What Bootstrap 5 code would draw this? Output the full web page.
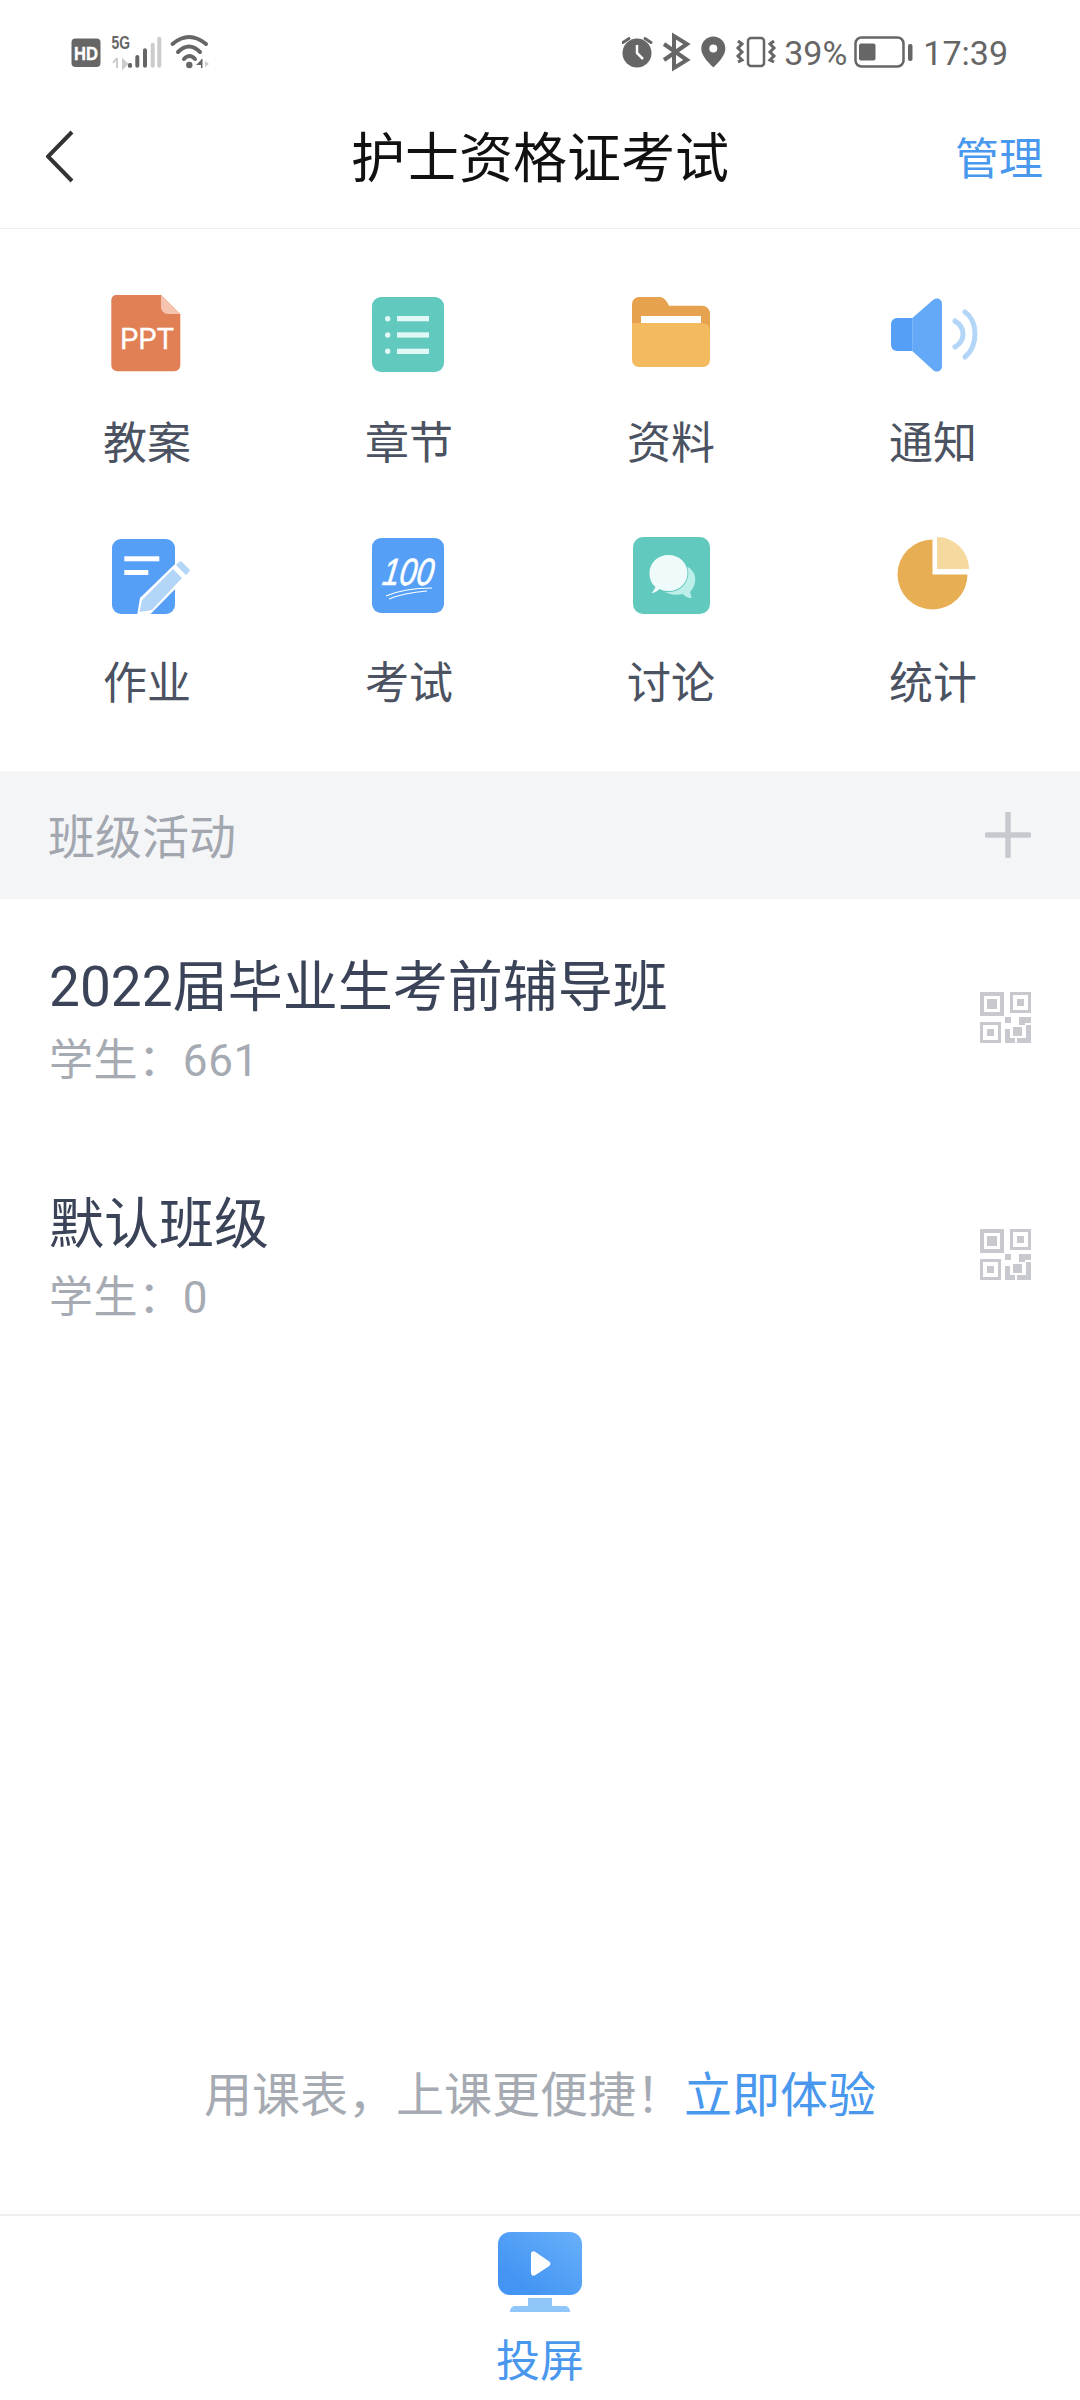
<!DOCTYPE html>
<html lang="zh-CN">
<head>
  <meta charset="UTF-8" />
  <meta name="viewport" content="width=device-width, initial-scale=1" />
  <title>护士资格证考试</title>
  <link href="https://cdn.jsdelivr.net/npm/bootstrap@5.3.3/dist/css/bootstrap.min.css" rel="stylesheet" />
  <style>
    body { font-family: Roboto, "Noto Sans CJK SC", sans-serif; background: #fff; }
    svg { display: block; }
    .stat-bar { height: 100px; padding: 0 72px 0 50px; color: #666; font-size: 34px; line-height: 60px; }
    .stat-num { padding-top: 6px; }
    .stat-icons { margin-right: 7px; }
    .stat-batt { margin-left: 7px; }
    .stat-time { margin-left: 9px; }
    .top-nav { height: 129px; padding: 0 37px 14px 46px; border-bottom: 1px solid #eeeeee; }
    .nav-left { width: 200px; }
    .nav-right { width: 209px; padding-top: 6px; }
    .nav-title { padding-top: 6px; font-size: 54px; line-height: 70px; color: #111; }
    .nav-manage { font-size: 44px; line-height: 70px; color: #4a98ee; text-decoration: none; }
    .tool-grid { padding-top: 61px; padding-bottom: 1px; }
    .tool-cell { height: 240px; }
    .tool-name { margin-top: 34px; font-size: 44px; line-height: 60px; color: #4b5261; }
    .group-band { height: 128px; padding: 0 49px 0 48px; background: #f4f5f7; font-size: 47px; color: #a2a6af; }
    .group-band span { padding-top: 6px; }
    .class-row { height: 237px; padding: 0 49px; }
    .class-text { padding-top: 8px; }
    .class-name { font-size: 55px; line-height: 66px; color: #3a4357; }
    .class-count { margin-top: 13px; font-size: 44px; line-height: 56px; letter-spacing: .6px; color: #a6aab2; }
    .promo-line { margin-bottom: 84px; font-size: 48px; line-height: 68px; color: #a6aab2; }
    .promo-line a { color: #4a98ee; text-decoration: none; }
    .cast-bar { padding: 16px 0 8px; border-top: 2px solid #eeeeee; }
    .cast-name { margin-top: 20px; font-size: 44px; line-height: 60px; color: #4a98ee; }
  </style>
</head>
<body>
  <div class="d-flex flex-column vh-100">

    <!-- status bar -->
    <div class="stat-bar d-flex align-items-center justify-content-between">
      <svg width="180" height="60" viewBox="0 0 180 60">
        <rect x="21.500" y="18.500" width="29" height="28.500" rx="4" fill="#666"/>
        <text x="24" y="39.500" font-family="Liberation Sans" font-weight="700" font-size="19" fill="#fff" stroke="#fff" stroke-width=".4" textLength="24" lengthAdjust="spacingAndGlyphs">HD</text>
        <text x="61.500" y="29.300" font-family="Liberation Sans" font-weight="700" font-size="17.500" fill="#666" textLength="18.500" lengthAdjust="spacingAndGlyphs">5G</text>
        <path d="M67 38v10M63 43l4-5M73 40v8l4-4z" stroke="#ccc" stroke-width="2" fill="#ccc"/>
        <rect x="78" y="43" width="4" height="4.700" rx="1.500" fill="#666"/>
        <rect x="85.300" y="35" width="4" height="12.700" rx="2" fill="#666"/>
        <rect x="93" y="28.300" width="4" height="19.400" rx="2" fill="#666"/>
        <rect x="100.700" y="22.700" width="4" height="25" rx="2" fill="#ccc"/>
        <rect x="107.300" y="16.700" width="4" height="31" rx="2" fill="#ccc"/>
        <path d="M122.500 24Q139 10 156 24M128 32Q139 21 150 32M134 39Q139.500 33 145 39" fill="none" stroke="#666" stroke-width="4" stroke-linecap="round"/>
        <circle cx="139.300" cy="45" r="3.200" fill="#666"/>
        <path d="M151 39v9h1.500v-9zM146 45l5-5v5z" fill="#666"/>
        <path d="M155 41l4 3-4 3z" fill="#ccc"/>
      </svg>
      <div class="d-flex align-items-center">
        <svg class="stat-icons" width="155" height="60" viewBox="0 0 155 60">
          <circle cx="15" cy="33" r="14.500" fill="#666"/>
          <path d="M15 25v8l6 6" fill="none" stroke="#fff" stroke-width="2.500"/>
          <path d="M1 22.500l6-4M23 18.500l6 4" stroke="#666" stroke-width="3" stroke-linecap="round"/>
          <path d="M42 24l23 16-13 8V16l13 8-23 16" fill="none" stroke="#666" stroke-width="4"/>
          <path d="M91.300 47.500c-7-7-12-12.500-12-19a12 12 0 0 1 24 0c0 6.500-5 12-12 19z" fill="#666"/>
          <circle cx="91.300" cy="28.500" r="4" fill="#fff"/>
          <rect x="126" y="18" width="16" height="28" rx="3" fill="none" stroke="#666" stroke-width="2.500"/>
          <path d="M116 21l4 3-4 4 4 4-4 4 4 4-4 2M152 21l-4 3 4 4-4 4 4 4-4 4 4 2" fill="none" stroke="#666" stroke-width="3"/>
        </svg>
        <span class="stat-num">39%</span>
        <svg class="stat-batt" width="60" height="60" viewBox="0 0 60 60">
          <rect x="1.500" y="17.500" width="48" height="29" rx="6" fill="none" stroke="#666" stroke-width="2.500"/>
          <rect x="5" y="23.500" width="16.500" height="17" rx="2" fill="#666"/>
          <rect x="54" y="24" width="4.500" height="17" rx="2" fill="#666"/>
        </svg>
        <span class="stat-num stat-time">17:39</span>
      </div>
    </div>

    <!-- top nav -->
    <div class="top-nav d-flex align-items-center justify-content-between">
      <div class="nav-left">
        <svg width="30" height="54" viewBox="0 0 30 54">
          <path d="M26 2L2 26.500 26 51" fill="none" stroke="#333" stroke-width="4"/>
        </svg>
      </div>
      <div class="nav-title">护士资格证考试</div>
      <div class="nav-right text-end"><a class="nav-manage" href="#">管理</a></div>
    </div>

    <!-- tools -->
    <div class="tool-grid row g-0 px-3">
      <div class="col-3 tool-cell text-center">
        <svg class="mx-auto" width="110" height="90" viewBox="0 0 110 90">
          <path d="M24 5h45l19.300 19v51.300a6 6 0 0 1-6 6H25.300a6 6 0 0 1-6-6V10a5 5 0 0 1 5-5z" fill="#e17f55"/>
          <path d="M69 5l19.300 19H76a7 7 0 0 1-7-7z" fill="#f6c4ae"/>
          <text x="55" y="58.500" text-anchor="middle" font-family="Roboto" font-size="29" fill="#fff" stroke="#fff" stroke-width=".3">PPT</text>
        </svg>
        <div class="tool-name">教案</div>
      </div>
      <div class="col-3 tool-cell text-center">
        <svg class="mx-auto" width="110" height="90" viewBox="0 0 110 90">
          <rect x="18" y="7" width="72" height="75" rx="9" fill="#62c9bf"/>
          <g fill="#e0f8f6">
            <circle cx="33.700" cy="28.700" r="2.700"/><circle cx="33.700" cy="45" r="2.700"/><circle cx="33.700" cy="61.300" r="2.700"/>
            <rect x="43" y="26" width="32" height="5.300"/><rect x="43" y="42.300" width="32" height="5.300"/><rect x="43" y="58.700" width="32" height="5.300"/>
          </g>
        </svg>
        <div class="tool-name">章节</div>
      </div>
      <div class="col-3 tool-cell text-center">
        <svg class="mx-auto" width="110" height="90" viewBox="0 0 110 90">
          <path d="M16 14a7 7 0 0 1 7-7h20c4 0 6 2 8 5l2 3.700h33a8 8 0 0 1 8 8V50H16z" fill="#e6a24e"/>
          <rect x="25" y="26" width="60" height="12" fill="#fff"/>
          <path d="M16 33h70a8 8 0 0 1 8 8v29a7 7 0 0 1-7 7H23a7 7 0 0 1-7-7z" fill="#f4ba60"/>
        </svg>
        <div class="tool-name">资料</div>
      </div>
      <div class="col-3 tool-cell text-center">
        <svg class="mx-auto" width="110" height="90" viewBox="0 0 110 90">
          <path d="M34.500 28H19a6 6 0 0 0-6 6v21a6 6 0 0 0 6 6h15.500z" fill="#569ff6"/>
          <path d="M34.300 28L55 10c3.500-3 9-1.500 9 4v62c0 5.500-5.500 7-9 4L34.300 61z" fill="#63a9f7"/>
          <path d="M77 31c5 3 8 8 8 13s-3 10-8 13M87 22c7 5 10 13 10 22s-3 17-10 23" fill="none" stroke="#b3d5f7" stroke-width="5" stroke-linecap="round"/>
        </svg>
        <div class="tool-name">通知</div>
      </div>

      <div class="col-3 tool-cell text-center">
        <svg class="mx-auto" width="110" height="90" viewBox="0 0 110 90">
          <rect x="20" y="9" width="63" height="75" rx="9" fill="#569ff6"/>
          <rect x="32.300" y="26.300" width="35" height="5" fill="#fff"/>
          <rect x="32.300" y="40" width="24" height="5" fill="#fff"/>
          <path d="M45.300 84l2.700-16 35-34 16 9-40.500 41z" fill="#fff"/>
          <path d="M47.500 82l2.500-12 31-31 9 9-30 32z" fill="#b3d5f7"/>
          <path d="M84 35l3-3a2 2 0 0 1 3 0l7 7a2 2 0 0 1 0 3l-3 3z" fill="#b3d5f7"/>
        </svg>
        <div class="tool-name">作业</div>
      </div>
      <div class="col-3 tool-cell text-center">
        <svg class="mx-auto" width="110" height="90" viewBox="0 0 110 90">
          <rect x="18" y="8" width="72" height="75" rx="9" fill="#569ff6"/>
          <text x="28" y="55" font-family="Liberation Sans" font-style="italic" font-size="38" fill="#fff" stroke="#fff" stroke-width=".6" textLength="51" lengthAdjust="spacingAndGlyphs" transform="skewX(-8) translate(7 0)">100</text>
          <path d="M32 66c14-6 30-8 46-8M35 69c12-5 26-7 38-8" fill="none" stroke="#fff" stroke-width="1.200"/>
        </svg>
        <div class="tool-name">考试</div>
      </div>
      <div class="col-3 tool-cell text-center">
        <svg class="mx-auto" width="110" height="90" viewBox="0 0 110 90">
          <rect x="17" y="7" width="77" height="77" rx="10" fill="#62c9bf"/>
          <path d="M72 37c6 4 8 9 7 15-1 5-3 8-5 10 1 3 1 5 2 6-5 0-7-2-9-4-8 2-17 0-22-5z" fill="#bcefe9"/>
          <ellipse cx="52.300" cy="43.300" rx="20" ry="19" fill="#62c9bf"/>
          <path d="M33.500 43c0-10 8-18 19-18s19 8 19 18-8 18-19 18c-4 0-7-1-9-2-2 2-5 4-8 4 2-2 3-4 4-6-4-3-6-8-6-14z" fill="#effbfb"/>
        </svg>
        <div class="tool-name">讨论</div>
      </div>
      <div class="col-3 tool-cell text-center">
        <svg class="mx-auto" width="110" height="90" viewBox="0 0 110 90">
          <path d="M54.500 9.500v35h35A35 35 0 1 1 54.500 9.500z" fill="#e8ae54"/>
          <path d="M59 7v32h32A32 32 0 0 0 59 7z" fill="#f5d99f"/>
        </svg>
        <div class="tool-name">统计</div>
      </div>
    </div>

    <!-- class list -->
    <div class="group-band d-flex align-items-center justify-content-between">
      <span>班级活动</span>
      <svg width="46" height="46" viewBox="0 0 46 46">
        <path d="M23 2v42M2 23h42" stroke="#c8c9ce" stroke-width="5.500" stroke-linecap="round"/>
      </svg>
    </div>

    <div class="class-row d-flex align-items-center justify-content-between">
      <div class="class-text">
        <div class="class-name">2022届毕业生考前辅导班</div>
        <div class="class-count">学生：661</div>
      </div>
      <svg width="51" height="51" viewBox="0 0 51 51" fill="#c8c9ce">
        <path fill-rule="evenodd" d="M0 0h24v24H0zM4 4v16h16V4zM30 0h21v21H30zM33 3v15h15V3zM0 30h21v21H0zM3 33v15h15V33z"/>
        <path d="M7 7h10v10H7zM37 7h7v7h-7zM7 37h7v7H7zM25 25h6v6h-6zM39 25h12v6h-6v2h-6zM25 37h5v9h5v5H25zM33 35h9v9h-9zM46 33h5v18H37v-5h9z"/>
      </svg>
    </div>
    <div class="class-row d-flex align-items-center justify-content-between">
      <div class="class-text">
        <div class="class-name">默认班级</div>
        <div class="class-count">学生：0</div>
      </div>
      <svg width="51" height="51" viewBox="0 0 51 51" fill="#c8c9ce">
        <path fill-rule="evenodd" d="M0 0h24v24H0zM4 4v16h16V4zM30 0h21v21H30zM33 3v15h15V3zM0 30h21v21H0zM3 33v15h15V33z"/>
        <path d="M7 7h10v10H7zM37 7h7v7h-7zM7 37h7v7H7zM25 25h6v6h-6zM39 25h12v6h-6v2h-6zM25 37h5v9h5v5H25zM33 35h9v9h-9zM46 33h5v18H37v-5h9z"/>
      </svg>
    </div>

    <!-- bottom -->
    <div class="promo-line mt-auto text-center">用课表，上课更便捷！<a href="#">立即体验</a></div>
    <div class="cast-bar text-center">
      <svg class="mx-auto" width="84" height="80" viewBox="0 0 84 80">
        <defs>
          <linearGradient id="castFill" x1="0" y1="1" x2="1" y2="0">
            <stop offset="0.200" stop-color="#4394f3"/>
            <stop offset="1" stop-color="#68b0fa"/>
          </linearGradient>
        </defs>
        <rect x="0" y="0" width="84" height="63" rx="12" fill="url(#castFill)"/>
        <path d="M33 22.500c0-3 2-4 4.500-2.500l13 9c2.500 1.500 2.500 4 0 5.500l-13 8.500c-2.500 1.500-4.500.5-4.500-2.500z" fill="#fff"/>
        <rect x="30" y="66" width="24" height="9" fill="#90c6f9"/>
        <path d="M12 80c0-3.500 2-6 5-6h50c3 0 5 2.500 5 6z" fill="#90c6f9"/>
      </svg>
      <div class="cast-name">投屏</div>
    </div>
  </div>
</body>
</html>
